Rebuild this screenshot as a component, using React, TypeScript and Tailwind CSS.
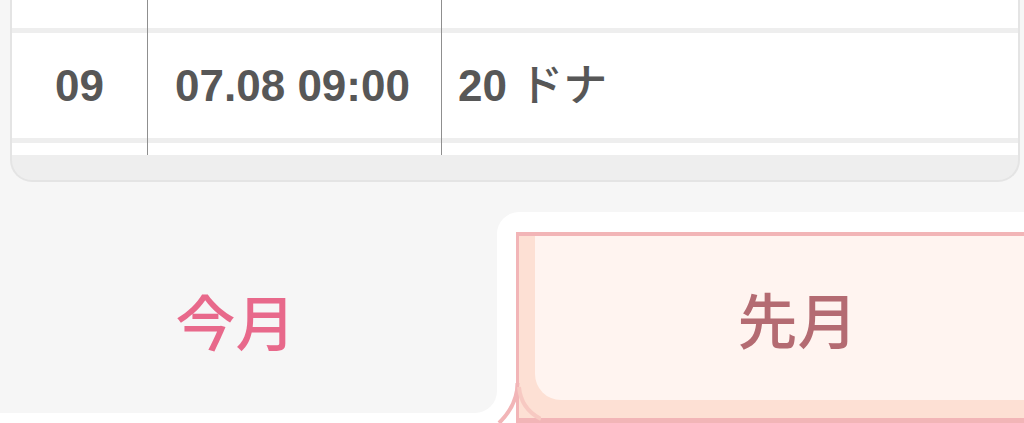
export default function App() {
  const font = { fontFamily: '"Liberation Sans", "Noto Sans CJK JP", sans-serif' };
  return (
    <div className="h-[423px] w-[1024px] overflow-hidden bg-white" style={font}>
      {/* history card */}
      <div className="h-[183px] bg-[#f6f6f6] pl-[10px] pr-[4px]">
        <div className="flex h-[182px] flex-col overflow-hidden rounded-b-[22px] border-x-2 border-b-2 border-[#e4e4e4] bg-[#eeeeee]">
          <div className="flex h-[155px] bg-white text-[44px] font-bold text-[#575757]">
            <Column className="w-[135px]">
              <span className="w-full text-center">09</span>
            </Column>
            <Column className="w-[294px] border-l border-[#8f8f8f]">
              <span className="w-full pr-[4px] text-center">07.08 09:00</span>
            </Column>
            <Column className="flex-1 border-l border-[#8f8f8f]">
              <span className="pl-[16px]">
                20 <span className="font-medium">ドナ</span>
              </span>
            </Column>
          </div>
        </div>
      </div>

      {/* month tabs */}
      <div className="flex h-[240px]">
        <div className="flex h-[230px] w-[497px] justify-center rounded-br-[22px] bg-[#f6f6f6] pr-[26px] pt-[113px]">
          <span className="text-[60px] font-medium leading-none text-[#e8698b]">今月</span>
        </div>
        <div className="flex-1 bg-[#f6f6f6] pt-[29px]">
          <div className="relative h-[211px] rounded-tl-[22px] bg-white pl-[19px] pt-[20px]">
            <div className="h-[191px] border-t-[4px] border-b-[5px] border-l-[3px] border-[#f2b5b7] bg-[#fde0d4] pb-[18px] pl-[16px]">
              <div className="flex h-full justify-center rounded-bl-[26px] bg-[#fff4f0] pl-[36px] pt-[58px]">
                <span className="text-[60px] font-medium leading-none text-[#b46b72]">先月</span>
              </div>
            </div>
            {/* flared foot of the raised tab */}
            <svg className="absolute bottom-0 left-0" width="44" height="40" viewBox="0 0 44 40" fill="none">
              <path d="M20.5 0 Q20.5 22 2 40" stroke="#f2b5b7" strokeWidth="4" />
              <path d="M22 4 Q24 26 44 36" stroke="#f7c9c2" strokeWidth="4" />
            </svg>
          </div>
        </div>
      </div>
    </div>
  );
}

function Column({ className, children }: { className: string; children: React.ReactNode }) {
  return (
    <div className={`flex flex-col ${className}`}>
      <div className="h-[28px]" />
      <div className="h-[5px] bg-[#eeeeee]" />
      <div className="flex h-[105px] items-center">{children}</div>
      <div className="h-[5px] bg-[#eeeeee]" />
      <div className="h-[12px]" />
    </div>
  );
}
